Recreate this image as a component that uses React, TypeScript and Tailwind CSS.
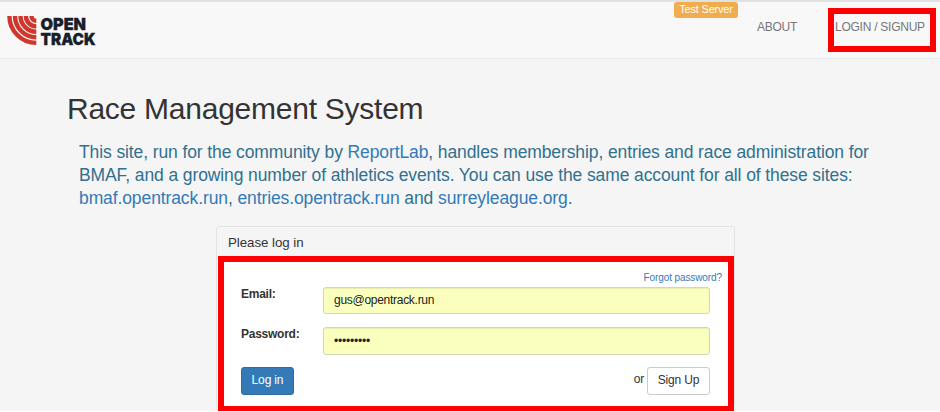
import React from "react";

const arcs = [26.9, 21.3, 15.8, 10.4];

function Logo() {
  return (
    <svg width="96" height="38" viewBox="0 0 96 38" className="block" aria-label="Open Track">
      <clipPath id="quarter">
        <rect x="0" y="2" width="30.3" height="32" />
      </clipPath>
      <g clipPath="url(#quarter)" fill="none" stroke="#d0372c" strokeWidth="4.4">
        {arcs.map((r) => (
          <circle key={r} cx="30.3" cy="2" r={r} />
        ))}
        <circle cx="30.3" cy="2" r="4.8" strokeWidth="4.4" />
      </g>
      <g fill="#17202a" stroke="#17202a" strokeWidth="0.3" fontFamily="Inter, sans-serif" fontWeight="900" fontSize="16.6">
        <text x="34.5" y="16" textLength="45.5" lengthAdjust="spacingAndGlyphs">OPEN</text>
        <text x="34.5" y="30.6" textLength="55" lengthAdjust="spacingAndGlyphs">TRACK</text>
      </g>
    </svg>
  );
}

function Field({ label, type, value, className, inputClass }: { label: string; type: string; value: string; className: string; inputClass: string }) {
  return (
    <label className={`flex ${className}`}>
      <span className="w-[82px] shrink-0 text-[12px] leading-[15px] font-bold tracking-[-0.25px] text-[#333]">{label}</span>
      <input
        type={type}
        defaultValue={value}
        className={`h-full w-[387px] rounded-[3px] border border-[#d3d6b8] bg-[#faffbd] px-[10px] text-[12px] text-[#222] shadow-[inset_0_1px_1px_rgba(0,0,0,0.07)] outline-none ${inputClass}`}
      />
    </label>
  );
}

export default function App() {
  return (
    <div className="relative h-[412px] w-[940px] overflow-hidden border-b border-white bg-[#f5f5f5] font-['Liberation_Sans',Arial,sans-serif] text-[#333]">
      <header className="flex h-[59px] border-t-2 border-b border-t-[#e1e1e1] border-b-[#e9e9e9] bg-[#f8f8f8]">
        <div className="ml-[6px] mt-[12px] w-[668px]"><Logo /></div>
        <span className="h-[16px] w-[64px] rounded-[3px] bg-[#f0ad4e] text-center text-[11px] leading-[15px] tracking-[-0.2px] text-white">Test Server</span>
        <nav className="flex pt-[17px] text-[12px] leading-[17px] tracking-[-0.25px] text-[#777]">
          <a className="ml-[19px] w-[78px]">ABOUT</a>
          <a className="whitespace-nowrap">LOGIN / SIGNUP</a>
        </nav>
      </header>
      <main>
        <h1 className="ml-[67px] mt-[32px] text-[30px] leading-[36px] tracking-[-0.25px]">Race Management System</h1>
        <p className="ml-[79px] mt-[14px] whitespace-nowrap text-[17.5px] leading-[23px] tracking-[-0.105px] text-[#31708f] [&_a]:text-[#337ab7]">
          This site, run for the community by <a>ReportLab</a>, handles membership, entries and race administration for<br />
          BMAF, and a growing number of athletics events. You can use the same account for all of these sites:<br />
          <a>bmaf.opentrack.run</a>, <a>entries.opentrack.run</a> and <a>surreyleague.org</a>.
        </p>
        <section className="ml-[216px] mt-[16px] h-[182px] w-[519px] rounded-[3px] border border-[#e3e3e3] bg-white">
          <h2 className="h-[32px] rounded-t-[3px] border-b border-[#ddd] bg-[#f5f5f5] pl-[11px] text-[13.3px] leading-[32px] tracking-[-0.05px]">Please log in</h2>
          <form className="pl-[24px]">
            <div className="mr-[12px] h-[28px] pt-[10px] text-right text-[10px] leading-[17px] tracking-[-0.1px] text-[#337ab7]">Forgot password?</div>
            <Field label="Email:" type="text" value="gus@opentrack.run" className="h-[27px]" inputClass="pb-[2px] tracking-[-0.28px]" />
            <Field label="Password:" type="password" value="password1" className="mt-[13px] h-[28px]" inputClass="tracking-[-0.2px]" />
            <div className="mr-[24px] mt-[12px] flex h-[28px] text-[12px] tracking-[-0.15px]">
              <button type="button" className="w-[53px] rounded-[3px] border border-[#2e6da4] bg-[#337ab7] pb-[2px] text-white">Log in</button>
              <span className="ml-auto mr-[3px] leading-[25px]">or</span>
              <button type="button" className="w-[63px] rounded-[3px] border border-[#ccc] bg-white pb-[2px]">Sign Up</button>
            </div>
          </form>
        </section>
      </main>
      <div className="absolute left-[828px] top-[8px] h-[44px] w-[108px] border-6 border-[#f00]" />
      <div className="absolute left-[218px] top-[256px] h-[156px] w-[516px] border-6 border-[#f00]" />
    </div>
  );
}
